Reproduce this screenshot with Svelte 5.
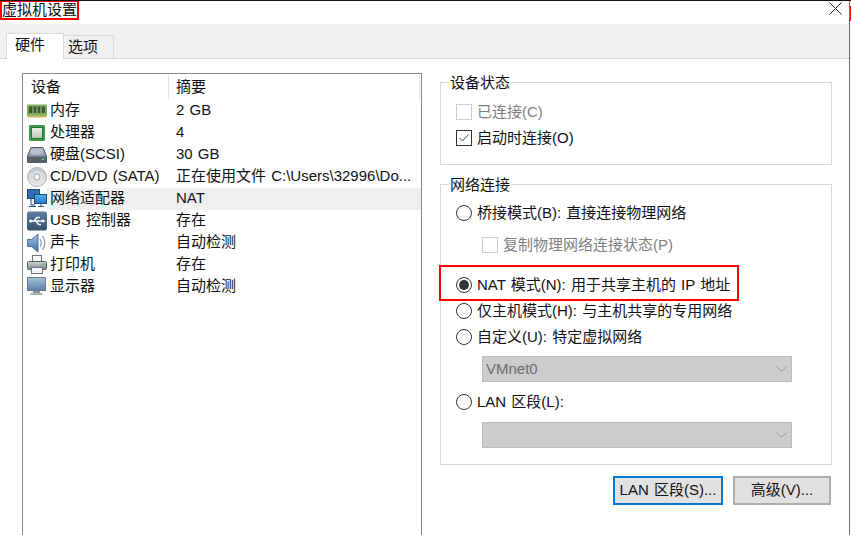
<script>
  const devices = [
    { icon: "ram", name: "内存", summary: "2 GB" },
    { icon: "cpu", name: "处理器", summary: "4" },
    { icon: "disk", name: "硬盘(SCSI)", summary: "30 GB" },
    { icon: "cd", name: "CD/DVD (SATA)", summary: "正在使用文件 C:\\Users\\32996\\Do..." },
    { icon: "net", name: "网络适配器", summary: "NAT", selected: true },
    { icon: "usb", name: "USB 控制器", summary: "存在" },
    { icon: "sound", name: "声卡", summary: "自动检测" },
    { icon: "printer", name: "打印机", summary: "存在" },
    { icon: "display", name: "显示器", summary: "自动检测" },
  ];
</script>

<div class="dialog">
  <div class="titlebar">
    <span class="title">虚拟机设置</span>
    <svg class="close" width="13" height="13" viewBox="0 0 13 13">
      <path d="M0.5 0.5L12.5 12.5M12.5 0.5L0.5 12.5" stroke="#222" stroke-width="1" fill="none" />
    </svg>
  </div>

  <div class="body">
    <div class="tabs">
      <div class="tab active">硬件</div>
      <div class="tab">选项</div>
    </div>

    <div class="panel">
      <div class="list">
        <div class="list-head">
          <div class="col-name">设备</div>
          <div class="col-sum">摘要</div>
        </div>
        {#each devices as d}
          <div class="row">
            <svg class="dev-icon" width="20" height="20" viewBox="0 0 20 20">
              <defs>
                <linearGradient id="g-{d.icon}" x1="0" y1="0" x2="0" y2="1">
                  {#if d.icon === "cpu"}
                    <stop offset="0" stop-color="#eef2ea" /><stop offset="1" stop-color="#b9c4b4" />
                  {:else if d.icon === "disk"}
                    <stop offset="0" stop-color="#b4bec8" /><stop offset="1" stop-color="#6f7c88" />
                  {:else if d.icon === "cd"}
                    <stop offset="0" stop-color="#c3c6c9" /><stop offset="1" stop-color="#e9eaeb" />
                  {:else if d.icon === "usb"}
                    <stop offset="0" stop-color="#5b7da0" /><stop offset="1" stop-color="#34506e" />
                  {:else if d.icon === "sound"}
                    <stop offset="0" stop-color="#a6c6e6" /><stop offset="1" stop-color="#3a6ea4" />
                  {:else if d.icon === "display"}
                    <stop offset="0" stop-color="#a4c2dc" /><stop offset="1" stop-color="#587fa6" />
                  {:else if d.icon === "net"}
                    <stop offset="0" stop-color="#58b0ec" /><stop offset="1" stop-color="#1f78c4" />
                  {:else}
                    <stop offset="0" stop-color="#d0d3d6" /><stop offset="1" stop-color="#7e848a" />
                  {/if}
                </linearGradient>
              </defs>
              {#if d.icon === "ram"}
                <rect x="0" y="3.5" width="20" height="12" rx="1" fill="#7fae5a" />
                <rect x="2" y="5.5" width="16" height="6.5" fill="#3a5a34" />
                <path d="M6 5.5v6.5M10 5.5v6.5M14 5.5v6.5" stroke="#a9c08e" stroke-width="1" />
                <rect x="1" y="14.5" width="18" height="2" fill="#c8b765" />
              {:else if d.icon === "cpu"}
                <rect x="2" y="2" width="16" height="16" rx="1" fill="#3d9c4c" />
                <rect x="4.5" y="4.5" width="11" height="11" fill="url(#g-cpu)" stroke="#2d7038" />
              {:else if d.icon === "disk"}
                <path d="M4 2.5H16L19.5 11V17.5H0.5V11Z" fill="url(#g-disk)" stroke="#4f5a66" />
                <rect x="1" y="11.5" width="18" height="5.5" fill="#56616d" />
                <ellipse cx="9.5" cy="7" rx="6.5" ry="3" fill="#c6ced6" opacity="0.6" />
                <rect x="15" y="13.5" width="2" height="1.5" fill="#66d466" />
              {:else if d.icon === "cd"}
                <circle cx="10" cy="10" r="9.5" fill="url(#g-cd)" stroke="#b0b3b6" />
                <circle cx="10" cy="10" r="6" fill="#dddfe1" />
                <circle cx="10" cy="10" r="3" fill="#fbfbfb" stroke="#a2a5a8" />
              {:else if d.icon === "net"}
                <rect x="0.5" y="0.5" width="12" height="9" fill="#2f6fb0" stroke="#1d4a80" />
                <path d="M4 9.5V16H8M2 17.5H9" stroke="#24527f" fill="none" />
                <rect x="7.5" y="5.5" width="12" height="9" fill="url(#g-net)" stroke="#1d4a80" />
                <path d="M11 17.5H17M14 14.5V17" stroke="#24527f" fill="none" />
              {:else if d.icon === "usb"}
                <rect x="0" y="0.5" width="20" height="19" rx="2.5" fill="url(#g-usb)" />
                <path d="M3 10H16M7 10L10 6.5H13M9 10L11.5 13.5H14" stroke="#fff" stroke-width="1.3" fill="none" />
                <path d="M15.5 8L18.5 10L15.5 12Z" fill="#fff" />
                <circle cx="3.5" cy="10" r="1.5" fill="#fff" />
              {:else if d.icon === "sound"}
                <path d="M0.5 6.5H4.5L11 1V19L4.5 13.5H0.5Z" fill="url(#g-sound)" stroke="#34587e" stroke-width="0.8" />
                <path d="M13 6Q15.5 10 13 14M15.5 3Q20 10 15.5 17" stroke="#8a9fb4" stroke-width="1.3" fill="none" />
              {:else if d.icon === "printer"}
                <rect x="5.5" y="0.5" width="9" height="6" fill="#f4f4f4" stroke="#70757a" />
                <rect x="0.5" y="6.5" width="19" height="8" rx="1" fill="url(#g-printer)" stroke="#5a5f64" />
                <rect x="15.5" y="8.5" width="2" height="1.5" fill="#59c85c" />
                <rect x="4.5" y="12.5" width="11" height="6" fill="#f4f4f4" stroke="#70757a" />
              {:else}
                <rect x="0.5" y="0.5" width="18" height="13" fill="url(#g-display)" stroke="#707a84" />
                <rect x="6" y="14" width="7" height="2" fill="#8a929a" />
                <rect x="3.5" y="16" width="12" height="2" fill="#a8b0b8" />
              {/if}
            </svg>
            <div class="name" class:selected={d.selected}>{d.name}</div>
            <div class="sum" class:selected={d.selected}>{d.summary}</div>
          </div>
        {/each}
      </div>

      <div class="side">
        <fieldset class="group status">
          <legend>设备状态</legend>
          <div class="check disabled"><span class="box"></span><span class="label">已连接(C)</span></div>
          <div class="check">
            <span class="box">
              <svg width="14" height="14" viewBox="0 0 14 14"><path d="M2.5 7L5.5 10L11.5 3.5" stroke="#444" fill="none" /></svg>
            </span><span class="label">启动时连接(O)</span>
          </div>
        </fieldset>

        <fieldset class="group network">
          <legend>网络连接</legend>
          <div class="radio"><span class="dot"></span><span class="label">桥接模式(B): 直接连接物理网络</span></div>
          <div class="check disabled sub"><span class="box"></span><span class="label">复制物理网络连接状态(P)</span></div>
          <div class="radio nat"><span class="dot on"></span><span class="label">NAT 模式(N): 用于共享主机的 IP 地址</span></div>
          <div class="radio"><span class="dot"></span><span class="label">仅主机模式(H): 与主机共享的专用网络</span></div>
          <div class="radio"><span class="dot"></span><span class="label">自定义(U): 特定虚拟网络</span></div>
          <div class="select">VMnet0<svg class="chev" width="11" height="6" viewBox="0 0 11 6"><path d="M0.5 0.5L5.5 5.5L10.5 0.5" stroke="#9a9a9a" fill="none" /></svg></div>
          <div class="radio lan"><span class="dot"></span><span class="label">LAN 区段(L):</span></div>
          <div class="select second"><svg class="chev" width="11" height="6" viewBox="0 0 11 6"><path d="M0.5 0.5L5.5 5.5L10.5 0.5" stroke="#9a9a9a" fill="none" /></svg></div>
        </fieldset>

        <div class="buttons">
          <div class="btn primary">LAN 区段(S)...</div>
          <div class="btn">高级(V)...</div>
        </div>
      </div>
    </div>
  </div>

  <div class="edge"></div>
  <div class="edge-red"></div>
</div>

<style>
  :global(body) {
    margin: 0;
    background: #fff;
  }

  .dialog {
    position: relative;
    width: 851px;
    height: 535px;
    overflow: hidden;
    background: #fff;
    font-family: "Liberation Sans", "Noto Sans CJK SC", sans-serif;
    font-size: 15px;
    word-spacing: 1px;
    color: #111;
    box-sizing: border-box;
    border-top: 1px solid #111;
  }

  .titlebar {
    height: 23px;
    display: flex;
    align-items: flex-start;
    justify-content: space-between;
  }

  .title {
    box-sizing: border-box;
    height: 19px;
    width: 79px;
    border: 2px solid #f00;
    border-top-width: 1px;
    line-height: 16px;
    white-space: nowrap;
    overflow: hidden;
  }

  .close {
    margin: 1px 9px 0 0;
  }

  .body {
    height: 511px;
    background: #f0f0f0;
    padding-top: 10px;
    box-sizing: border-box;
  }

  .tabs {
    display: flex;
    align-items: flex-end;
    padding-left: 6px;
    height: 24px;
    position: relative;
    z-index: 1;
  }

  .tab {
    box-sizing: border-box;
    width: 50px;
    height: 23px;
    padding-left: 4px;
    line-height: 22px;
    background: #f0f0f0;
    border: 1px solid #d9d9d9;
    border-left: 0;
    border-bottom: 0;
  }

  .tab.active {
    width: 58px;
    height: 26px;
    padding-left: 8px;
    line-height: 21px;
    background: #fff;
    border-left: 1px solid #d9d9d9;
    margin-bottom: -1px;
  }

  .panel {
    display: flex;
    gap: 18px;
    background: #fff;
    border-top: 1px solid #d9d9d9;
    padding: 14px 0 0 22px;
    height: 500px;
    box-sizing: border-box;
  }

  .list {
    box-sizing: border-box;
    width: 400px;
    height: 480px;
    flex: none;
    border: 1px solid #828790;
  }

  .list-head {
    display: flex;
    height: 26px;
    line-height: 26px;
  }

  .col-name {
    width: 138px;
    padding-left: 8px;
    margin-right: -1px;
  }

  .col-sum {
    flex: 1;
    padding-left: 7px;
    height: 24px;
    margin-top: 1px;
    line-height: 24px;
    border-left: 1px solid #e5e5e5;
    border-right: 1px solid #e5e5e5;
    margin-right: 1px;
  }

  .row {
    display: flex;
    align-items: center;
    height: 22px;
    white-space: nowrap;
  }

  .dev-icon {
    flex: none;
    margin-left: 4px;
  }

  .name {
    box-sizing: border-box;
    width: 129px;
    height: 22px;
    line-height: 20px;
    padding-left: 3px;
  }

  .sum {
    flex: 1;
    height: 22px;
    line-height: 20px;
  }

  .selected {
    background: #f0f0f0;
  }

  .side {
    width: 392px;
    flex: none;
  }

  .group {
    margin: 0;
    padding: 0;
    border: 1px solid #d9d9d9;
    box-sizing: border-box;
    width: 392px;
    min-width: 0;
  }

  .group legend {
    margin-left: 8px;
    padding: 2px 1px 0;
    line-height: 16px;
  }

  .status {
    height: 92px;
    padding-top: 8px;
  }

  .network {
    height: 290px;
    margin-top: 10px;
    padding-top: 7px;
  }

  .check,
  .radio {
    display: flex;
    align-items: center;
    height: 26px;
    padding-left: 15px;
    white-space: nowrap;
  }

  .label {
    padding-bottom: 4px;
  }

  .check.disabled {
    color: #7f7f7f;
  }

  .box,
  .dot {
    box-sizing: border-box;
    width: 16px;
    height: 16px;
    border: 1px solid #333;
    margin-right: 5px;
    display: flex;
    align-items: center;
    justify-content: center;
  }

  .disabled .box {
    border-color: #ccc;
  }

  .sub {
    padding-left: 41px;
    margin-top: 6px;
  }

  .dot {
    border-radius: 50%;
  }

  .dot.on::after {
    content: "";
    width: 10px;
    height: 10px;
    border-radius: 50%;
    background: #333;
  }

  .nat {
    position: relative;
    margin-top: 14px;
  }

  .nat::before {
    content: "";
    position: absolute;
    left: -2px;
    top: -7px;
    width: 300px;
    height: 36px;
    border: 2px solid #f00;
    box-sizing: border-box;
  }

  .select {
    box-sizing: border-box;
    position: relative;
    width: 310px;
    height: 26px;
    margin: 6px 0 0 41px;
    background: #cccccc;
    border: 1px solid #bcbcbc;
    color: #6d6d6d;
    line-height: 24px;
    padding-left: 3px;
  }

  .select.second {
    margin-top: 7px;
  }

  .chev {
    position: absolute;
    right: 4px;
    top: 9px;
  }

  .lan {
    margin-top: 7px;
  }

  .buttons {
    display: flex;
    justify-content: flex-end;
    gap: 10px;
    margin-top: 11px;
    padding-right: 1px;
  }

  .btn {
    box-sizing: border-box;
    width: 98px;
    height: 29px;
    line-height: 23px;
    text-align: center;
    background: #e1e1e1;
    border: 2px solid #adadad;
  }

  .btn.primary {
    width: 110px;
    border-color: #0078d7;
  }

  .edge {
    position: absolute;
    right: 1px;
    top: 0;
    width: 1px;
    height: 100%;
    background: #2b8ad8;
  }

  .edge-red {
    position: absolute;
    right: 0;
    top: 5px;
    width: 1px;
    height: 15px;
    background: #f00;
  }
</style>
